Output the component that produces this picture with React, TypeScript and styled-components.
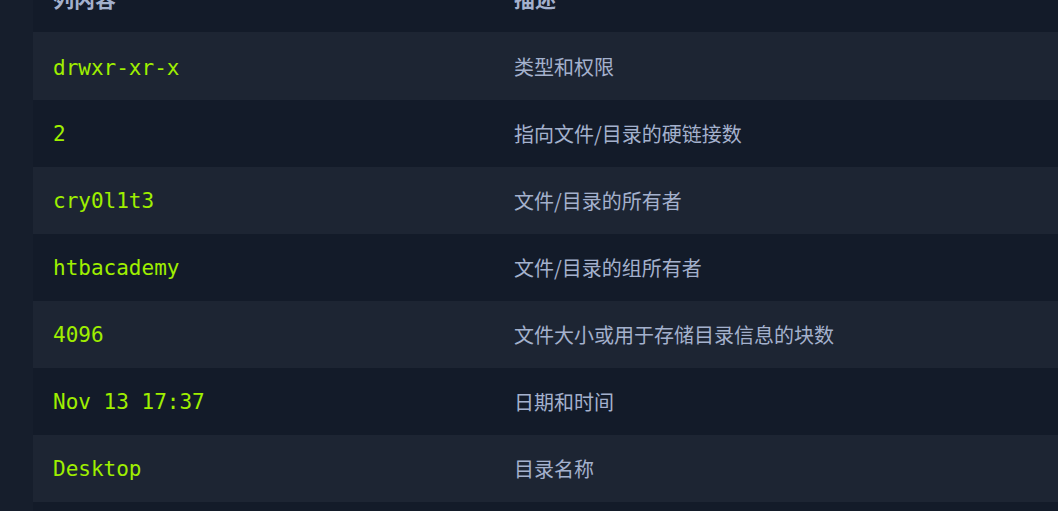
import styled, { createGlobalStyle } from 'styled-components'

const rows = [
  { value: 'drwxr-xr-x', desc: '类型和权限' },
  { value: '2', desc: '指向文件/目录的硬链接数' },
  { value: 'cry0l1t3', desc: '文件/目录的所有者' },
  { value: 'htbacademy', desc: '文件/目录的组所有者' },
  { value: '4096', desc: '文件大小或用于存储目录信息的块数' },
  { value: 'Nov 13 17:37', desc: '日期和时间' },
  { value: 'Desktop', desc: '目录名称' },
]

const GlobalStyle = createGlobalStyle`
  html, body {
    margin: 0;
    padding: 0;
    background: #131b29;
    overflow: hidden;
  }
  body {
    font-family: "Noto Sans CJK SC", "Noto Sans", sans-serif;
  }
`

const Page = styled.div`
  display: flex;
  width: 1058px;
  height: 511px;
  overflow: hidden;
  background: #131b29;
`

const Gutter = styled.div`
  flex: 0 0 33px;
  background: #161e2c;
`

const TableScroll = styled.div`
  flex: 1;
  overflow: hidden;
  /* page is scrolled so the header is mostly above the fold */
  margin-top: -34px;
`

const Table = styled.table`
  width: 1060px;
  border-collapse: collapse;
  table-layout: fixed;
`

const HeadCell = styled.th`
  height: 67px;
  padding: 0 20px;
  box-sizing: border-box;
  text-align: left;
  font-family: "Noto Sans CJK SC", "Noto Sans", sans-serif;
  font-size: 21px;
  font-weight: 700;
  line-height: 1.5;
  color: #a4b1cd;
  border-bottom: 2px solid #1d2533;
`

const Row = styled.tr<{ $striped: boolean }>`
  background: ${(p) => (p.$striped ? '#1d2533' : 'transparent')};
`

const Cell = styled.td<{ $mono?: boolean }>`
  height: 67px;
  padding: ${(p) => (p.$mono ? '3px 20px 0' : '0 20px')};
  box-sizing: border-box;
  vertical-align: middle;
  line-height: 1.5;
  font-size: ${(p) => (p.$mono ? '21px' : '20px')};
  white-space: nowrap;
  font-family: ${(p) =>
    p.$mono
      ? '"DejaVu Sans Mono", "Liberation Mono", monospace'
      : '"Noto Sans CJK SC", "Noto Sans", sans-serif'};
  color: ${(p) => (p.$mono ? '#9fef00' : '#a4b1cd')};
`

export default function App() {
  return (
    <>
      <GlobalStyle />
      <Page>
        <Gutter />
        <TableScroll>
          <Table>
            <colgroup>
              <col style={{ width: 461 }} />
              <col />
            </colgroup>
            <thead>
              <tr>
                <HeadCell>列内容</HeadCell>
                <HeadCell>描述</HeadCell>
              </tr>
            </thead>
            <tbody>
              {rows.map((r, i) => (
                <Row key={r.value} $striped={i % 2 === 0}>
                  <Cell $mono>{r.value}</Cell>
                  <Cell>{r.desc}</Cell>
                </Row>
              ))}
            </tbody>
          </Table>
        </TableScroll>
      </Page>
    </>
  )
}
